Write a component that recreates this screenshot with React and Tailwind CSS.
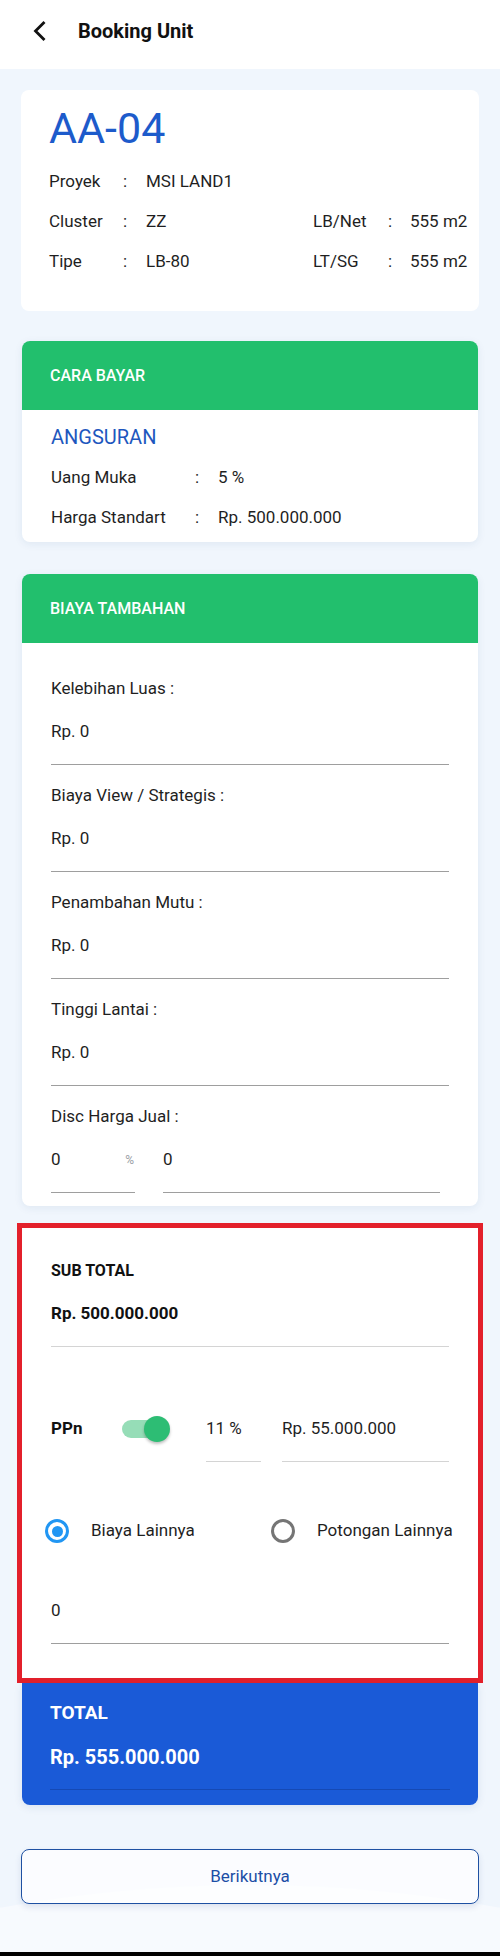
import React from "react";

const font = { fontFamily: "Roboto, 'Noto Sans', 'Liberation Sans', sans-serif" };

function InfoRow({ label, value, rLabel, rValue }) {
  return (
    <div className="flex h-[40px] items-center whitespace-nowrap text-[17px] text-[#1f1f1f]">
      <div className="flex w-[264px] shrink-0 items-center">
        <span className="w-[74px] shrink-0">{label}</span>
        <span className="w-[23px] shrink-0">:</span>
        <span>{value}</span>
      </div>
      {rLabel && (
        <div className="flex shrink-0 items-center">
          <span className="w-[75px] shrink-0">{rLabel}</span>
          <span className="w-[22px] shrink-0">:</span>
          <span>{rValue}</span>
        </div>
      )}
    </div>
  );
}

function PayRow({ label, value }) {
  return (
    <div className="flex h-[40px] items-center whitespace-nowrap text-[17px] text-[#1f1f1f]">
      <span className="w-[144px]">{label}</span>
      <span className="w-[23px]">:</span>
      <span>{value}</span>
    </div>
  );
}

function Field({ label, value, first }) {
  return (
    <div className={first ? "" : "mt-[11px]"}>
      <div className="flex h-[40px] items-center text-[17px] text-[#1f1f1f]">{label}</div>
      <div className="box-content mt-[3px] flex h-[40px] items-center border-b border-[#9e9e9e] pb-[12px] text-[17px] text-[#1f1f1f]">
        {value}
      </div>
    </div>
  );
}

export default function App() {
  return (
    <div className="relative flex min-h-[1956px] w-[500px] flex-col overflow-hidden bg-[#F0F6FD]" style={font}>
      <svg className="pointer-events-none absolute left-0 top-[1860px]" width="500" height="96" viewBox="0 0 500 96">
        <path d="M-60 60 Q250 -10 560 60 L560 96 L-60 96 Z" fill="#F7FAFE" />
      </svg>

      {/* Header */}
      <div className="relative flex h-[69px] shrink-0 items-center bg-white pb-[8px]">
        <svg className="ml-[32px]" width="14" height="20" viewBox="0 0 14 20">
          <polyline points="11.5,2 3.5,10 11.5,18" fill="none" stroke="#111" strokeWidth="2.8" strokeLinecap="square" />
        </svg>
        <span className="ml-[32px] text-[20px] font-bold text-[#111]">Booking Unit</span>
      </div>

      <div className="relative flex flex-col px-[21px]">
        {/* Unit card */}
        <div className="mt-[21px] rounded-[8px] bg-white px-[28px] pb-[29px] pt-[13px]">
          <div className="flex h-[50px] items-center text-[43px] leading-none text-[#1D5BCB]">AA-04</div>
          <div className="mt-[9px]">
            <InfoRow label="Proyek" value="MSI LAND1" />
            <InfoRow label="Cluster" value="ZZ" rLabel="LB/Net" rValue="555 m2" />
            <InfoRow label="Tipe" value="LB-80" rLabel="LT/SG" rValue="555 m2" />
          </div>
        </div>

        {/* Cara Bayar */}
        <div className="mx-[1px] mt-[30px] overflow-hidden rounded-[8px] bg-white shadow-[0_2px_8px_rgba(30,60,120,0.08)]">
          <div className="flex h-[69px] items-center bg-[#22BF6D] px-[28px] text-[16px] font-medium text-white">CARA BAYAR</div>
          <div className="px-[29px] pb-[4px] pt-[7px]">
            <div className="flex h-[40px] items-center text-[20px] text-[#1E57BE]">ANGSURAN</div>
            <div className="mt-[1px]">
              <PayRow label="Uang Muka" value="5 %" />
              <PayRow label="Harga Standart" value="Rp. 500.000.000" />
            </div>
          </div>
        </div>

        {/* Biaya Tambahan */}
        <div className="mx-[1px] mt-[32px] overflow-hidden rounded-[8px] bg-white shadow-[0_2px_8px_rgba(30,60,120,0.08)]">
          <div className="flex h-[69px] items-center bg-[#22BF6D] px-[28px] text-[16px] font-medium text-white">BIAYA TAMBAHAN</div>
          <div className="px-[29px] pb-[13px] pt-[26px]">
            <Field first label="Kelebihan Luas :" value="Rp. 0" />
            <Field label="Biaya View / Strategis :" value="Rp. 0" />
            <Field label="Penambahan Mutu :" value="Rp. 0" />
            <Field label="Tinggi Lantai :" value="Rp. 0" />
            <div className="mt-[11px]">
              <div className="flex h-[40px] items-center text-[17px] text-[#1f1f1f]">Disc Harga Jual :</div>
              <div className="mt-[3px] flex items-start">
                <div className="box-content flex h-[40px] w-[84px] items-center justify-between border-b border-[#9e9e9e] pb-[12px] text-[17px] text-[#1f1f1f]">
                  <span>0</span>
                  <span className="pr-[1px] text-[12px] text-[#9aa0a6]">%</span>
                </div>
                <div className="box-content ml-[28px] flex h-[40px] w-[277px] items-center border-b border-[#9e9e9e] pb-[12px] text-[17px] text-[#1f1f1f]">0</div>
              </div>
            </div>
          </div>
        </div>

        {/* Sub total (highlighted) */}
        <div className="mx-[-4px] mt-[17px] border-[5px] border-[#E3202B] bg-white px-[29px] pb-[34px] pt-[23px]">
          <div className="flex h-[40px] items-center text-[16px] font-bold text-[#111]">SUB TOTAL</div>
          <div className="box-content mt-[3px] flex h-[40px] items-center border-b border-[#d4d4d4] pb-[12px] text-[17px] font-bold text-[#111]">Rp. 500.000.000</div>

          <div className="mt-[62px] flex items-start">
            <div className="flex h-[40px] w-[71px] items-center text-[17px] font-bold text-[#111]">PPn</div>
            <div className="flex h-[40px] w-[84px] items-center">
              <div className="relative h-[28px] w-[48px]">
                <div className="absolute left-0 top-[5px] h-[18px] w-[44px] rounded-full bg-[#96DDB7]" />
                <div className="absolute left-[22px] top-[1px] h-[26px] w-[26px] rounded-full bg-[#2DBD74] shadow-[0_2px_3px_rgba(0,0,0,0.25)]" />
              </div>
            </div>
            <div className="box-content flex h-[40px] w-[55px] items-center border-b border-[#d4d4d4] pb-[12px] text-[17px] text-[#1f1f1f]">11 %</div>
            <div className="box-content ml-[21px] flex h-[40px] w-[167px] items-center border-b border-[#d4d4d4] pb-[12px] text-[17px] text-[#1f1f1f]">Rp. 55.000.000</div>
          </div>

          <div className="mt-[49px] flex h-[40px] items-center whitespace-nowrap text-[17px] text-[#1f1f1f]">
            <div className="ml-[-6px] flex h-[24px] w-[24px] shrink-0 items-center justify-center rounded-full border-[3px] border-[#2196F3]">
              <div className="h-[11px] w-[11px] rounded-full bg-[#2196F3]" />
            </div>
            <span className="ml-[22px] w-[180px] shrink-0">Biaya Lainnya</span>
            <div className="h-[24px] w-[24px] shrink-0 rounded-full border-[3px] border-[#757575]" />
            <span className="ml-[22px]">Potongan Lainnya</span>
          </div>

          <div className="box-content mt-[40px] flex h-[40px] items-center border-b border-[#9e9e9e] pb-[12px] text-[17px] text-[#1f1f1f]">0</div>
        </div>

        {/* Total */}
        <div className="mx-[1px] rounded-b-[8px] bg-[#1A5AD7] px-[28px] pb-[15px] pt-[10px] text-white shadow-[0_2px_8px_rgba(30,60,120,0.1)]">
          <div className="flex h-[40px] items-center text-[19px] font-bold">TOTAL</div>
          <div className="box-content mt-[4px] flex h-[40px] items-center border-b border-[#1549B5] pb-[12px] text-[20px] font-bold">Rp. 555.000.000</div>
        </div>

        {/* Button */}
        <button className="mt-[44px] flex h-[55px] w-full items-center justify-center rounded-[8px] border-[1.5px] border-[#1E50A2] bg-white/70 text-[17px] text-[#1C4EA6] shadow-[0_3px_6px_rgba(30,60,120,0.12)]">
          Berikutnya
        </button>
      </div>

      <div className="flex-1" />
      <div className="relative h-[4px] shrink-0 bg-black" />
    </div>
  );
}
